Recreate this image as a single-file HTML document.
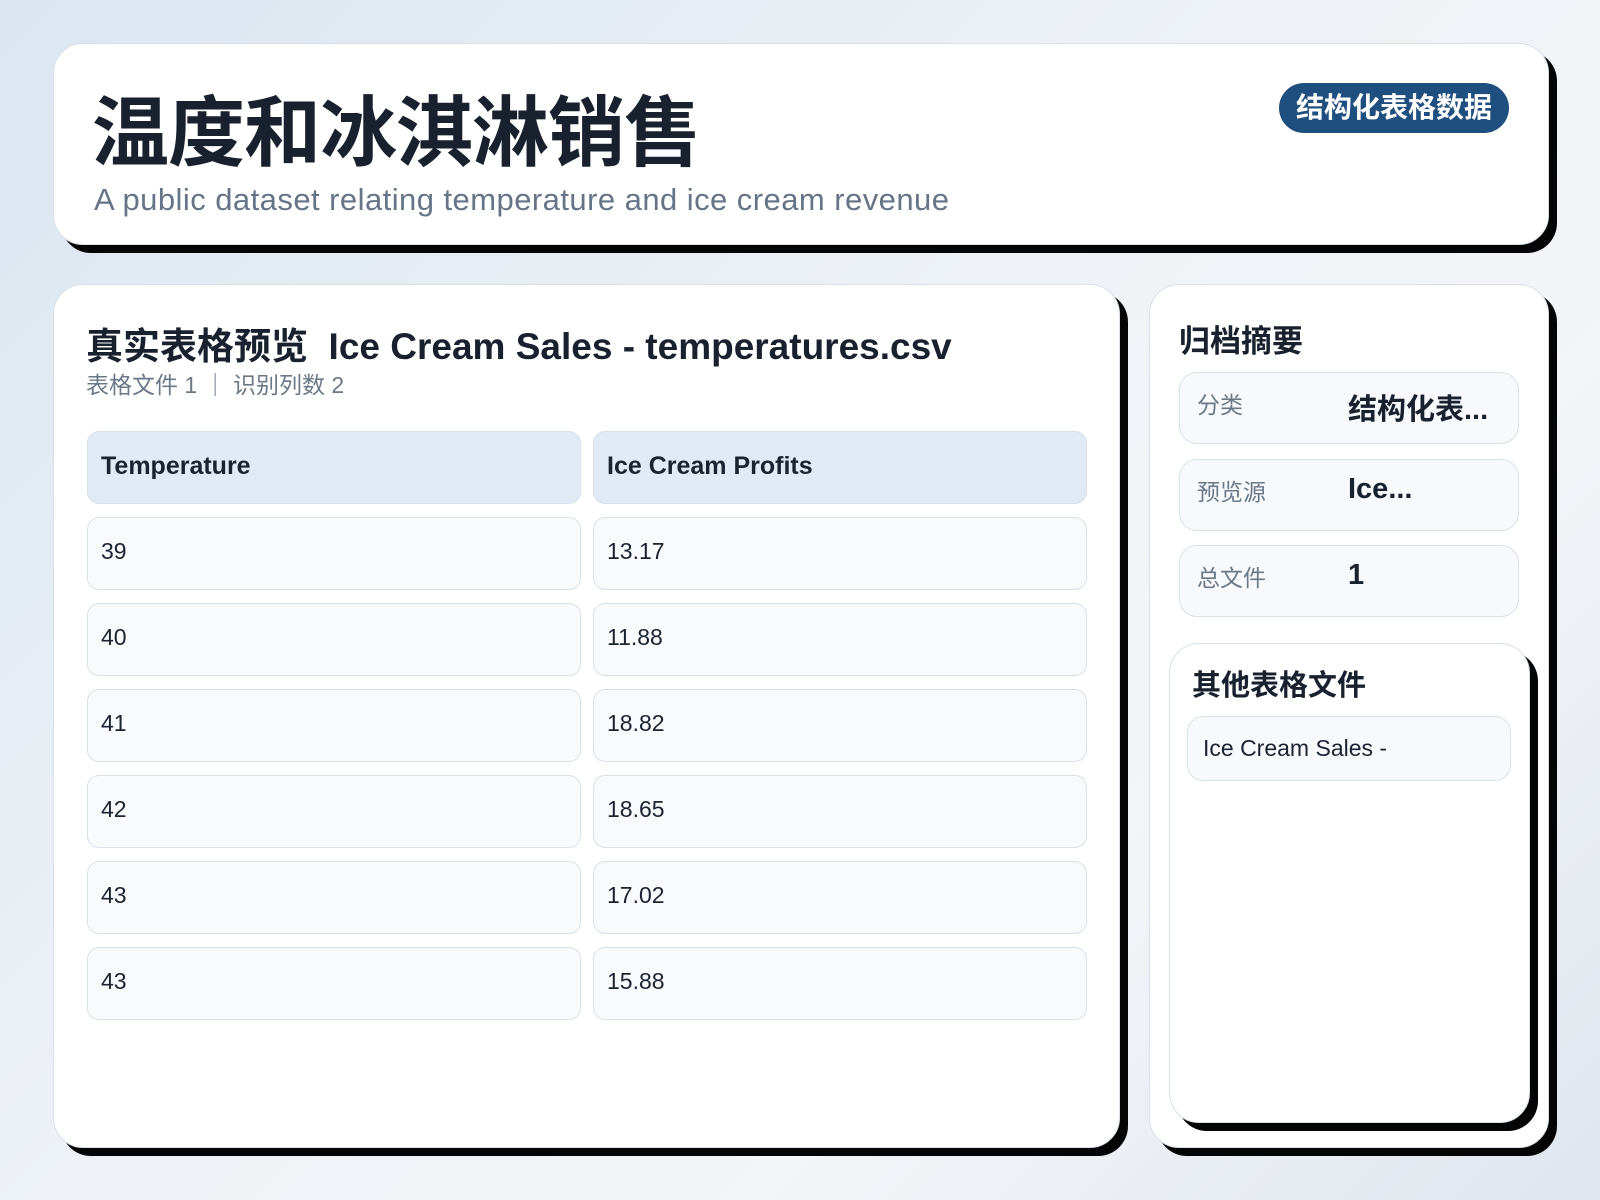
<!DOCTYPE html>
<html><head><meta charset="utf-8"><style>
*{box-sizing:border-box;margin:0;padding:0}
body{width:1600px;height:1200px;overflow:hidden;font-family:"Liberation Sans","Noto Sans CJK SC",sans-serif;background:linear-gradient(135deg,#dbe6f1 0%,#eef2f6 45%,#f3f5f8 70%,#dfe6ee 100%);position:relative;color:#172033}
.card{position:absolute;background:#fff;border:1px solid #d9e0e8;border-radius:30px;box-shadow:8px 8px 0 #050505}
.h1{position:absolute;left:92px;top:84px;font-size:77px;font-weight:700;letter-spacing:-1px;color:#19202e;line-height:100px}
.sub{position:absolute;left:94px;top:182px;font-size:31px;letter-spacing:0.45px;color:#667487}
.badge{position:absolute;left:1279px;top:83px;width:230px;height:50px;border-radius:25px;background:#1f4f7f;color:#fff;font-size:28px;font-weight:700;text-align:center;line-height:50px}
.t2{position:absolute;left:86px;top:316px;font-size:37px;font-weight:700;color:#19202e;white-space:nowrap}
.meta{position:absolute;left:86px;top:366px;font-size:23px;color:#6b7888}
.cell{position:absolute;height:73px;border:1px solid #d9e1ea;border-radius:12px;background:#f8fafc;font-size:23px;padding-left:13px;line-height:66px;color:#1b2231}
.hd{background:#e1e9f4;font-weight:700;font-size:25px;line-height:68px}
.sr{position:absolute;left:1179px;width:340px;height:72px;border:1px solid #d9e1ea;border-radius:18px;background:#f7f9fc}
.sr .l{position:absolute;left:17px;top:13px;font-size:23px;color:#6b7888}
.sr .v{position:absolute;left:168px;top:13px;font-size:29px;font-weight:700;color:#19202e}
</style></head><body>
<div class="card" style="left:53px;top:43px;width:1496px;height:202px"></div>
<div class="h1">温度和冰淇淋销售</div>
<div class="sub">A public dataset relating temperature and ice cream revenue</div>
<div class="badge">结构化表格数据</div>

<div class="card" style="left:53px;top:284px;width:1067px;height:864px"></div>
<div class="t2">真实表格预览&nbsp; Ice Cream Sales - temperatures.csv</div>
<div class="meta">表格文件 1 ｜ 识别列数 2</div>
<div class="cell hd" style="left:87px;top:431px;width:494px">Temperature</div>
<div class="cell hd" style="left:593px;top:431px;width:494px">Ice Cream Profits</div>
<div class="cell" style="left:87px;top:517px;width:494px">39</div><div class="cell" style="left:593px;top:517px;width:494px">13.17</div>
<div class="cell" style="left:87px;top:603px;width:494px">40</div><div class="cell" style="left:593px;top:603px;width:494px">11.88</div>
<div class="cell" style="left:87px;top:689px;width:494px">41</div><div class="cell" style="left:593px;top:689px;width:494px">18.82</div>
<div class="cell" style="left:87px;top:775px;width:494px">42</div><div class="cell" style="left:593px;top:775px;width:494px">18.65</div>
<div class="cell" style="left:87px;top:861px;width:494px">43</div><div class="cell" style="left:593px;top:861px;width:494px">17.02</div>
<div class="cell" style="left:87px;top:947px;width:494px">43</div><div class="cell" style="left:593px;top:947px;width:494px">15.88</div>

<div class="card" style="left:1149px;top:284px;width:400px;height:864px"></div>
<div style="position:absolute;left:1179px;top:316px;font-size:31px;font-weight:700;color:#19202e">归档摘要</div>
<div class="sr" style="top:372px"><span class="l">分类</span><span class="v">结构化表...</span></div>
<div class="sr" style="top:459px"><span class="l">预览源</span><span class="v">Ice...</span></div>
<div class="sr" style="top:545px"><span class="l">总文件</span><span class="v">1</span></div>
<div class="card" style="left:1169px;top:643px;width:361px;height:480px"></div>
<div style="position:absolute;left:1192px;top:662px;font-size:29px;font-weight:700;color:#19202e">其他表格文件</div>
<div style="position:absolute;left:1187px;top:716px;width:324px;height:65px;border:1px solid #d9e1ea;border-radius:16px;background:#f7f9fc;font-size:23px;line-height:63px;padding-left:15px;color:#1b2231">Ice Cream Sales -</div>
</body></html>
